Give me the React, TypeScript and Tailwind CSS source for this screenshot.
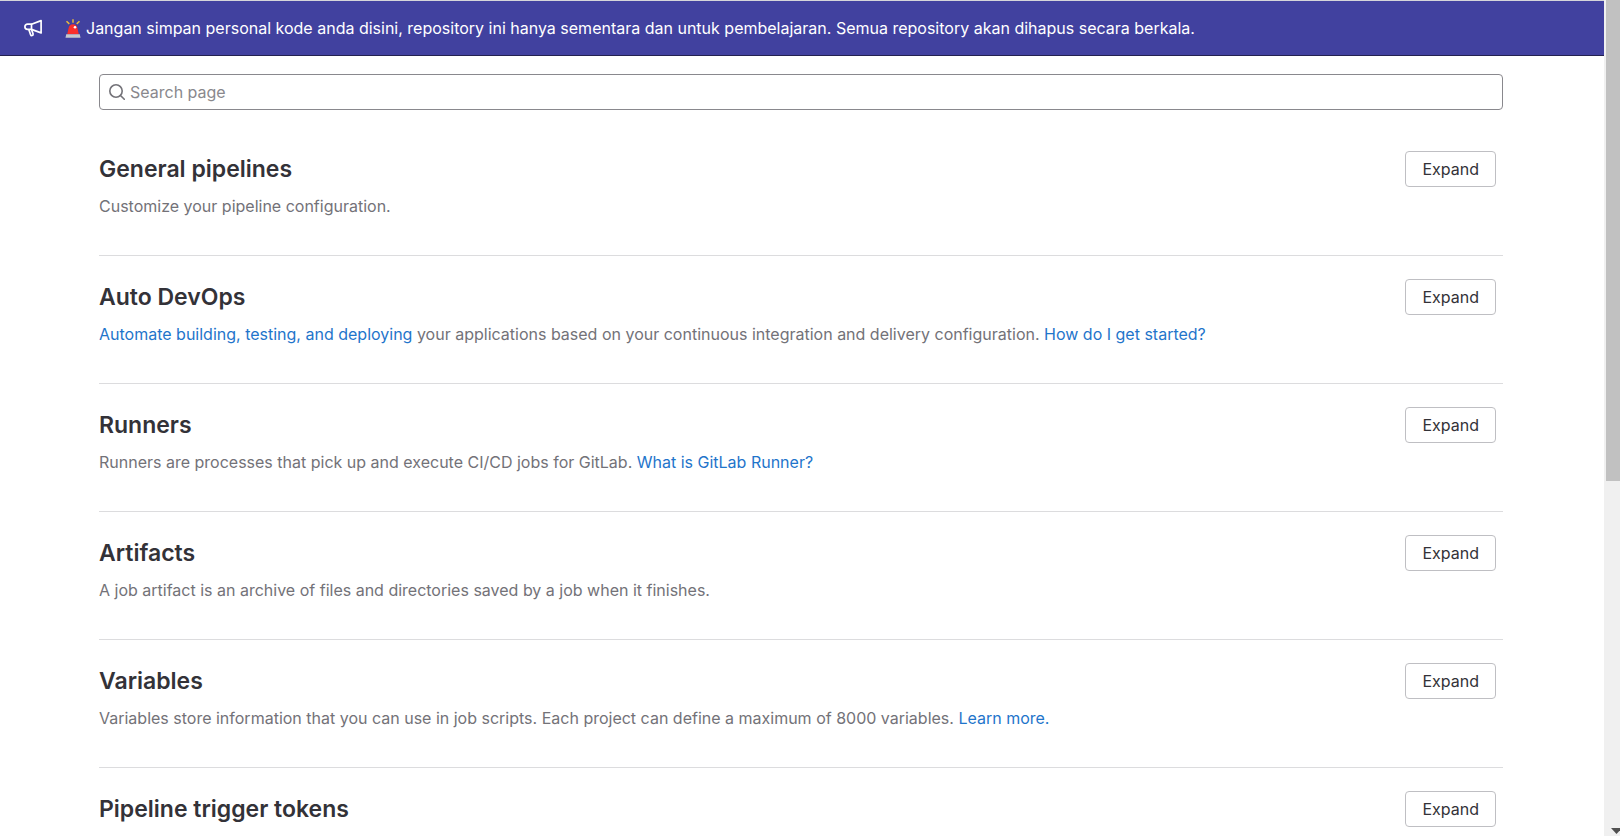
import type { ReactNode } from "react";

const linkClass = "text-[#1f75cb] hover:underline";

const sections: { title: string; description?: ReactNode }[] = [
  { title: "General pipelines", description: "Customize your pipeline configuration." },
  {
    title: "Auto DevOps",
    description: (
      <>
        <a href="#auto-devops" className={linkClass}>Automate building, testing, and deploying</a> your
        applications based on your continuous integration and delivery configuration.{" "}
        <a href="#get-started" className={linkClass}>How do I get started?</a>
      </>
    ),
  },
  {
    title: "Runners",
    description: (
      <>
        Runners are processes that pick up and execute CI/CD jobs for GitLab.{" "}
        <a href="#runner" className={linkClass}>What is GitLab Runner?</a>
      </>
    ),
  },
  {
    title: "Artifacts",
    description: "A job artifact is an archive of files and directories saved by a job when it finishes.",
  },
  {
    title: "Variables",
    description: (
      <>
        Variables store information that you can use in job scripts. Each project can define a maximum of
        8000 variables. <a href="#variables" className={linkClass}>Learn more.</a>
      </>
    ),
  },
  { title: "Pipeline trigger tokens" },
];

function Megaphone() {
  return (
    <svg viewBox="0 0 18 18" className="h-[18px] w-[18px] shrink-0" fill="none" stroke="currentColor" strokeWidth="1.7" strokeLinejoin="round" aria-hidden="true">
      <path d="M7.500 5.200 17.100 1.600v12.300L7.500 10.400" />
      <path d="M7.500 5.200H3.500a2.600 2.600 0 0 0 0 5.200h4z" />
      <path d="M4.800 10.400 6.600 15.700a1.300 1.300 0 0 0 2.500-.7L7.500 10.400" />
    </svg>
  );
}

function Siren() {
  return (
    <svg viewBox="0 0 16 19" className="h-[19px] w-4 shrink-0" aria-hidden="true">
      <path d="M8 .3v3.400M1.500 2.200l2.800 2.700M14.500 2.200l-2.800 2.700" stroke="#e8b93c" strokeWidth="1.500" fill="none" />
      <path d="M2.200 15.200 3.700 8.700c.4-2.300 2-3.500 4.300-3.500s3.900 1.200 4.300 3.500l1.500 6.500z" fill="#f92f2b" />
      <circle cx="10" cy="8.200" r="1.300" fill="#fff" />
      <path d="M1.200 15.200h13.600l.7 3.500H.5z" fill="#c6c8cc" />
    </svg>
  );
}

function SearchIcon() {
  return (
    <svg viewBox="0 0 16 16" className="h-4 w-4 shrink-0 text-[#737278]" fill="none" stroke="currentColor" strokeWidth="1.600" strokeLinecap="round" aria-hidden="true">
      <circle cx="7" cy="7" r="6.200" />
      <path d="m11.500 11.500 3.800 3.800" />
    </svg>
  );
}

function Scrollbar() {
  return (
    <div className="flex w-4 shrink-0 flex-col bg-[#f0f0f0] pl-0.5" aria-hidden="true">
      <div className="grow-23 basis-0 bg-[#c1c1c1]" />
      <div className="flex grow-17 basis-0 items-end justify-end overflow-hidden">
        <svg viewBox="0 0 9 8" className="h-2 w-[9px]">
          <path d="M0 0h11L5.500 6z" fill="#505050" />
        </svg>
      </div>
    </div>
  );
}

export default function App() {
  return (
    <div className="flex h-screen overflow-hidden bg-white font-['Inter','Noto_Sans',sans-serif] text-base leading-6 text-[#333238]">
      <div className="min-w-0 flex-1 overflow-hidden border-t border-[#d5d5da]">
        <header className="flex items-center border-b border-[#232150] bg-[#41419f] py-[15px] pr-4 pl-6 text-white">
          <Megaphone />
          <p className="ml-[23px] flex items-center gap-[5px]">
            <Siren />
            <span>
              Jangan simpan personal kode anda disini, repository ini hanya sementara dan untuk pembelajaran. Semua
              repository akan dihapus secara berkala.
            </span>
          </p>
        </header>
        <main className="pt-[18px] pr-[101px] pl-[99px]">
          <label className="flex h-9 items-center gap-[5px] rounded border border-[#89888d] px-[9px]">
            <SearchIcon />
            <input
              type="search"
              aria-label="Search page"
              placeholder="Search page"
              className="min-w-0 flex-1 bg-transparent outline-none placeholder:text-[#89888d]"
            />
          </label>
          <div className="divide-y divide-[#dcdcde] pt-[18px]">
            {sections.map((section) => (
              <section key={section.title} className="flex h-32 items-start justify-between pt-[23px] pr-[7px]">
                <div>
                  <h2 className="text-[23px] leading-9 font-semibold">{section.title}</h2>
                  {section.description && <p className="mt-[7px] text-[#737278]">{section.description}</p>}
                </div>
                <button type="button" aria-label={`Expand ${section.title}`} className="h-9 rounded border border-[#bfbfc3] px-4">
                  Expand
                </button>
              </section>
            ))}
          </div>
        </main>
      </div>
      <Scrollbar />
    </div>
  );
}
